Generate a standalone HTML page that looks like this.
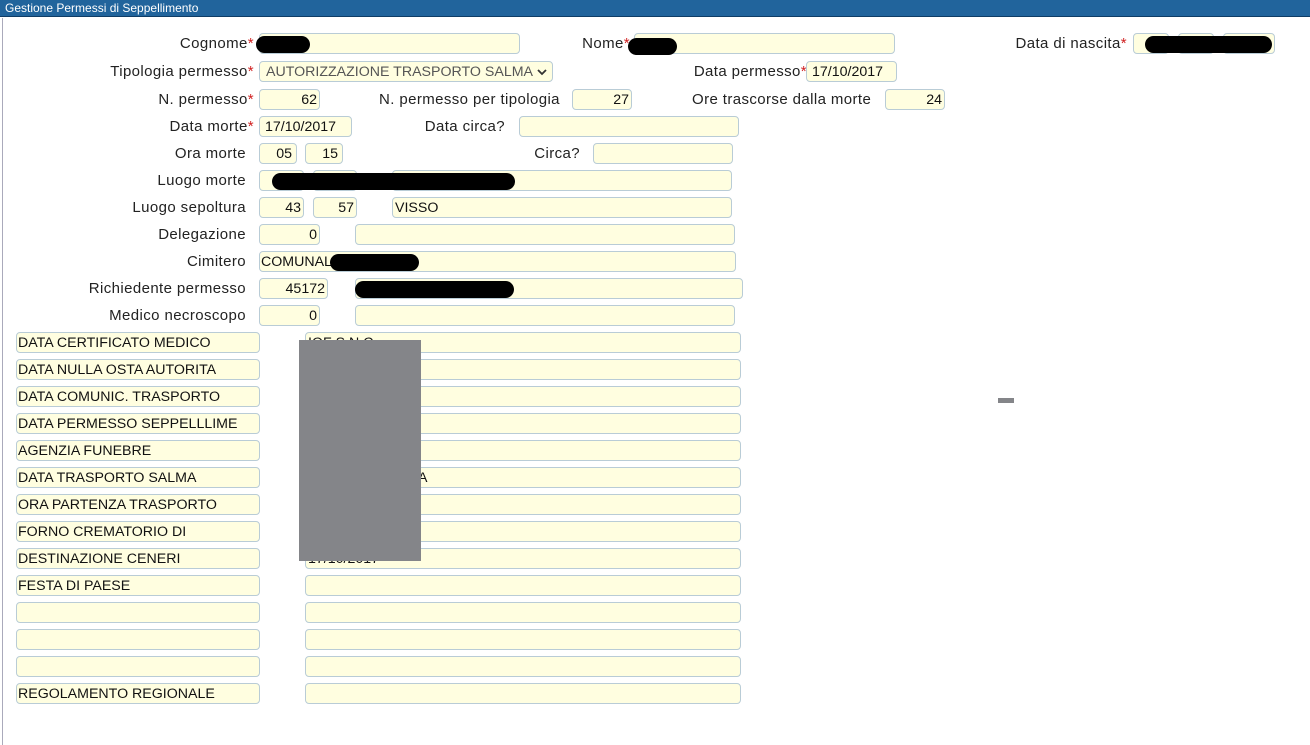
<!DOCTYPE html>
<html><head><meta charset="utf-8"><style>
body{margin:0;width:1310px;height:745px;background:#fff;position:relative;overflow:hidden;font-family:"Liberation Sans",sans-serif;font-size:14px;color:#222}
.hd{position:absolute;left:0;top:0;width:1310px;height:17px;background:#21649c;border-bottom:1px solid #0f3d66;color:#fff;font-size:12px;line-height:16px;padding-left:5px;box-sizing:border-box}
.bl{position:absolute;left:2px;top:18px;width:1px;height:727px;background:#aab}
.f{position:absolute;height:21px;border:1px solid #b9ccd6;border-radius:4px;background:#fffee0;box-sizing:border-box;line-height:21px;padding:0 2px;white-space:nowrap;overflow:hidden;color:#111;font-size:14.2px}
.r{text-align:right}
.l{position:absolute;line-height:22px;white-space:nowrap;color:#222;font-size:15px;letter-spacing:0.4px}
.s{color:#d02020}
.k{position:absolute;background:#000;border-radius:10px;height:17px}
</style></head><body>
<div class="hd">Gestione Permessi di Seppellimento</div>
<div class="bl"></div>

<div class="l" style="right:1056px;top:33px">Cognome<span class="s">*</span></div>
<div class="f" style="left:259px;top:33px;width:261px"></div>
<div class="k" style="left:256px;top:36px;width:54px"></div>
<div class="l" style="right:680px;top:33px">Nome<span class="s">*</span></div>
<div class="f" style="left:634px;top:33px;width:261px"></div>
<div class="k" style="left:628px;top:38px;width:49px"></div>
<div class="l" style="right:183px;top:33px">Data di nascita<span class="s">*</span></div>
<div class="f" style="left:1133px;top:33px;width:36px"></div>
<div class="f" style="left:1178px;top:33px;width:36px"></div>
<div class="f" style="left:1223px;top:33px;width:52px"></div>
<div class="k" style="left:1145px;top:36px;width:127px"></div>

<div class="l" style="right:1056px;top:61px">Tipologia permesso<span class="s">*</span></div>
<div class="f" style="left:259px;top:61px;width:294px;color:#555;padding-left:6px">AUTORIZZAZIONE TRASPORTO SALMA<svg style="position:absolute;right:5px;top:6px" width="10" height="8" viewBox="0 0 10 8"><path d="M1 2 L5 6 L9 2" fill="none" stroke="#333" stroke-width="1.8"/></svg></div>
<div class="l" style="right:503px;top:61px">Data permesso<span class="s">*</span></div>
<div class="f" style="left:806px;top:61px;width:91px;padding-left:5px">17/10/2017</div>

<div class="l" style="right:1056px;top:89px">N. permesso<span class="s">*</span></div>
<div class="f r" style="left:259px;top:89px;width:61px">62</div>
<div class="l" style="left:379px;top:89px">N. permesso per tipologia</div>
<div class="f r" style="left:572px;top:89px;width:60px">27</div>
<div class="l" style="left:692px;top:89px">Ore trascorse dalla morte</div>
<div class="f r" style="left:885px;top:89px;width:60px">24</div>

<div class="l" style="right:1056px;top:116px">Data morte<span class="s">*</span></div>
<div class="f" style="left:259px;top:116px;width:93px;padding-left:5px">17/10/2017</div>
<div class="l" style="right:805px;top:116px">Data circa?</div>
<div class="f" style="left:519px;top:116px;width:220px"></div>

<div class="l" style="right:1064px;top:143px">Ora morte</div>
<div class="f r" style="left:259px;top:143px;width:38px;padding-right:4px">05</div>
<div class="f r" style="left:305px;top:143px;width:38px;padding-right:4px">15</div>
<div class="l" style="right:730px;top:143px">Circa?</div>
<div class="f" style="left:593px;top:143px;width:140px"></div>

<div class="l" style="right:1064px;top:170px">Luogo morte</div>
<div class="f" style="left:259px;top:170px;width:45px"></div>
<div class="f" style="left:313px;top:170px;width:44px"></div>
<div class="f" style="left:392px;top:170px;width:340px;padding-left:112px">A</div>
<div class="k" style="left:272px;top:173px;width:243px"></div>

<div class="l" style="right:1064px;top:197px">Luogo sepoltura</div>
<div class="f r" style="left:259px;top:197px;width:45px">43</div>
<div class="f r" style="left:313px;top:197px;width:44px">57</div>
<div class="f" style="left:392px;top:197px;width:340px">VISSO</div>

<div class="l" style="right:1064px;top:224px">Delegazione</div>
<div class="f r" style="left:259px;top:224px;width:61px">0</div>
<div class="f" style="left:355px;top:224px;width:380px"></div>

<div class="l" style="right:1064px;top:251px">Cimitero</div>
<div class="f" style="left:259px;top:251px;width:477px;padding-left:1px">COMUNAL</div>
<div class="k" style="left:330px;top:254px;width:89px"></div>

<div class="l" style="right:1064px;top:278px">Richiedente permesso</div>
<div class="f r" style="left:259px;top:278px;width:69px">45172</div>
<div class="f" style="left:355px;top:278px;width:388px"></div>
<div class="k" style="left:355px;top:281px;width:159px"></div>

<div class="l" style="right:1064px;top:305px">Medico necroscopo</div>
<div class="f r" style="left:259px;top:305px;width:61px">0</div>
<div class="f" style="left:355px;top:305px;width:380px"></div>

<div class="f" style="left:16px;top:332px;width:244px;padding-left:1px">DATA CERTIFICATO MEDICO</div>
<div class="f" style="left:305px;top:332px;width:436px">IOF S.N.C.</div>
<div class="f" style="left:16px;top:359px;width:244px;padding-left:1px">DATA NULLA OSTA AUTORITA</div>
<div class="f" style="left:305px;top:359px;width:436px"></div>
<div class="f" style="left:16px;top:386px;width:244px;padding-left:1px">DATA COMUNIC. TRASPORTO</div>
<div class="f" style="left:305px;top:386px;width:436px"></div>
<div class="f" style="left:16px;top:413px;width:244px;padding-left:1px">DATA PERMESSO SEPPELLLIME</div>
<div class="f" style="left:305px;top:413px;width:436px"></div>
<div class="f" style="left:16px;top:440px;width:244px;padding-left:1px">AGENZIA FUNEBRE</div>
<div class="f" style="left:305px;top:440px;width:436px"></div>
<div class="f" style="left:16px;top:467px;width:244px;padding-left:1px">DATA TRASPORTO SALMA</div>
<div class="f" style="left:305px;top:467px;width:436px;padding-left:112px">A</div>
<div class="f" style="left:16px;top:494px;width:244px;padding-left:1px">ORA PARTENZA TRASPORTO</div>
<div class="f" style="left:305px;top:494px;width:436px"></div>
<div class="f" style="left:16px;top:521px;width:244px;padding-left:1px">FORNO CREMATORIO DI</div>
<div class="f" style="left:305px;top:521px;width:436px"></div>
<div class="f" style="left:16px;top:548px;width:244px;padding-left:1px">DESTINAZIONE CENERI</div>
<div class="f" style="left:305px;top:548px;width:436px">17/10/2017</div>
<div class="f" style="left:16px;top:575px;width:244px;padding-left:1px">FESTA DI PAESE</div>
<div class="f" style="left:305px;top:575px;width:436px"></div>
<div class="f" style="left:16px;top:602px;width:244px"></div>
<div class="f" style="left:305px;top:602px;width:436px"></div>
<div class="f" style="left:16px;top:629px;width:244px"></div>
<div class="f" style="left:305px;top:629px;width:436px"></div>
<div class="f" style="left:16px;top:656px;width:244px"></div>
<div class="f" style="left:305px;top:656px;width:436px"></div>
<div class="f" style="left:16px;top:683px;width:244px;padding-left:1px">REGOLAMENTO REGIONALE</div>
<div class="f" style="left:305px;top:683px;width:436px"></div>

<div style="position:absolute;left:299px;top:340px;width:122px;height:221px;background:#848589"></div>
<div style="position:absolute;left:998px;top:398px;width:16px;height:5px;background:#848589"></div>
</body></html>
